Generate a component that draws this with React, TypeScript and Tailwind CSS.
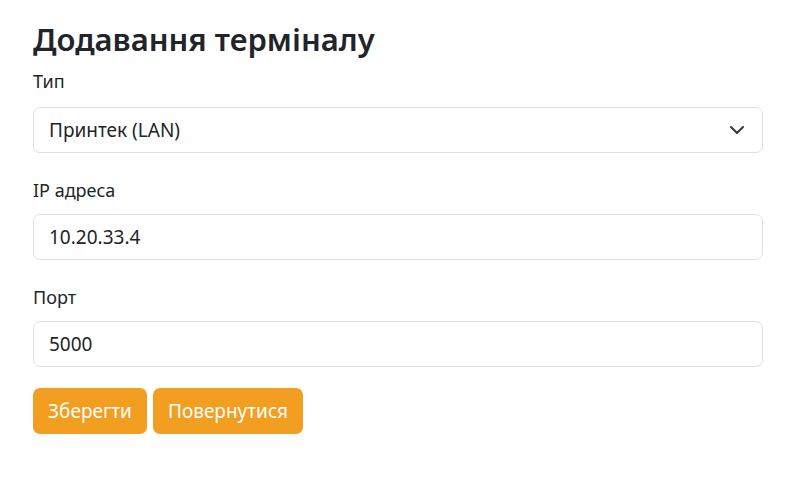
export default function App() {
    return (
        <div
            className="min-h-[482px] w-full bg-white pl-[33px] pr-[28px] pt-[19px] text-[#212529]"
            style={{ fontFamily: '"Noto Sans", "Open Sans", sans-serif' }}>
            <h3 className="mb-[9px] text-[31px] font-semibold leading-[40px]">Додавання терміналу</h3>

            <div className="mb-[24px]">
                <label className="mb-[12px] block text-[18px] leading-[27px]">Тип</label>
                <div className="relative">
                    <select className="h-[46px] w-full appearance-none rounded-[7px] border border-[#dee2e6] bg-white pl-[15px] pr-[40px] text-[19px] text-[#212529] outline-none">
                        <option>Принтек (LAN)</option>
                    </select>
                    <svg
                        className="pointer-events-none absolute right-[19px] top-1/2 -translate-y-1/2"
                        width="14"
                        height="8"
                        viewBox="0 0 14 8"
                        fill="none">
                        <polyline
                            points="1,1 7,7 13,1"
                            stroke="#343a40"
                            strokeWidth="2"
                            strokeLinecap="round"
                            strokeLinejoin="round"
                        />
                    </svg>
                </div>
            </div>

            <div className="mb-[24px]">
                <label className="mb-[10px] block text-[18px] leading-[27px]">IP адреса</label>
                <input
                    className="h-[46px] w-full rounded-[7px] border border-[#dee2e6] bg-white px-[15px] text-[19px] text-[#212529] outline-none"
                    defaultValue="10.20.33.4"
                />
            </div>

            <div className="mb-[21px]">
                <label className="mb-[10px] block text-[18px] leading-[27px]">Порт</label>
                <input
                    className="h-[46px] w-full rounded-[7px] border border-[#dee2e6] bg-white px-[15px] text-[19px] text-[#212529] outline-none"
                    defaultValue="5000"
                />
            </div>

            <div className="flex gap-[6px]">
                <button className="h-[46px] w-[114px] rounded-[7px] bg-[#f19e21] text-[19px] text-white">
                    Зберегти
                </button>
                <button className="h-[46px] w-[150px] rounded-[7px] bg-[#f19e21] text-[19px] text-white">
                    Повернутися
                </button>
            </div>
        </div>
    )
}
